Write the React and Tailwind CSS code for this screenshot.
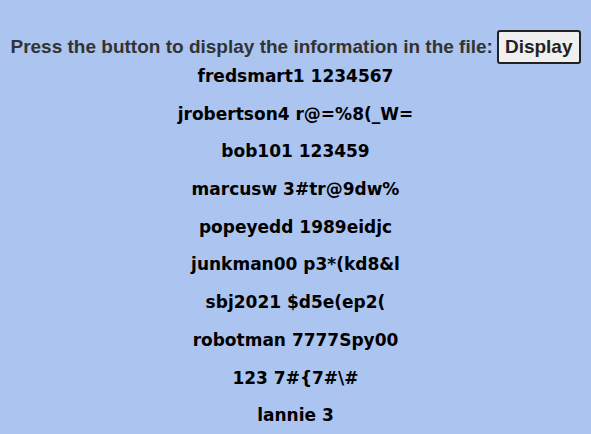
import { useState } from "react";

const entries = [
    "fredsmart1 1234567",
    "jrobertson4 r@=%8(_W=",
    "bob101 123459",
    "marcusw 3#tr@9dw%",
    "popeyedd 1989eidjc",
    "junkman00 p3*(kd8&l",
    "sbj2021 $d5e(ep2(",
    "robotman 7777Spy00",
    "123 7#{7#\\#",
    "lannie 3",
];

const App = () => {
    const [shown, setShown] = useState(true);

    return (
        <div className="min-h-screen bg-[#abc4f0] pt-[30px]">
            <div className="flex items-center justify-center gap-[4px] font-['Liberation_Sans',Arial,sans-serif] font-bold text-[19px] text-[#333333]">
                <span>Press the button to display the information in the file:</span>
                <button onClick={() => setShown(true)}
                    className="h-[34px] px-[6px] bg-[#f0f0f0] border-2 border-[#222] rounded-[3px] text-[19px] text-[#222]">
                    Display
                </button>
            </div>
            {shown && (
                <div className="flex flex-col items-center font-['DejaVu_Sans',sans-serif] font-bold text-[17px] text-black">
                    {entries.map((e, i) => (
                        <p key={i} className="h-[37.7px] leading-[20px] pt-[2px]">{e}</p>
                    ))}
                </div>
            )}
        </div>
    );
};

export default App;
